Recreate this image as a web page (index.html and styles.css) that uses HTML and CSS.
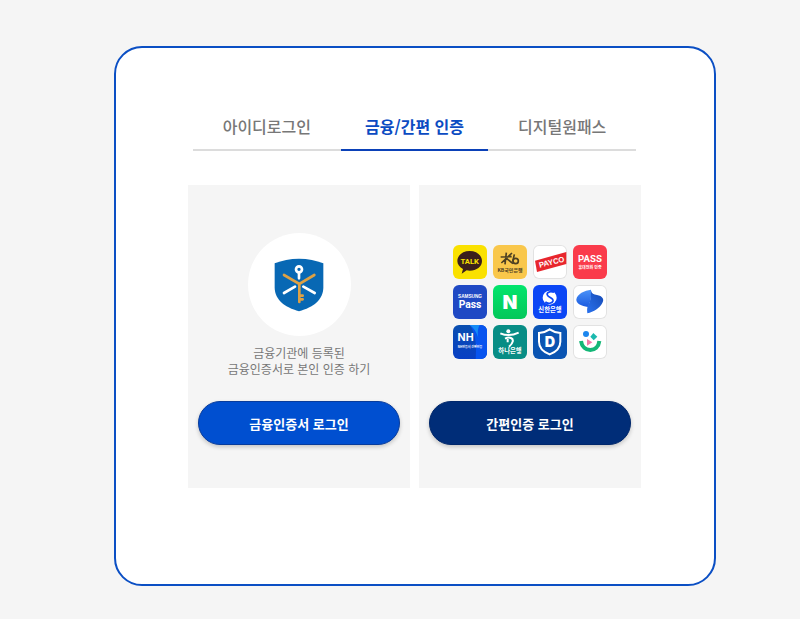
FILE: index.html
```html
<!DOCTYPE html>
<html lang="ko">
<head>
    <meta charset="UTF-8">
    <meta name="viewport" content="width=device-width, initial-scale=1.0">
    <title>금융/간편 인증 로그인</title>
    <link rel="stylesheet" href="styles.css">
</head>
<body>

    <main class="login-box">
        <nav class="tabs">
            <a href="#id" class="tab">아이디로그인</a>
            <a href="#cert" class="tab active" aria-current="page">금융/간편 인증</a>
            <a href="#onepass" class="tab">디지털원패스</a>
        </nav>

        <div class="panels">
            <section class="panel">
                <div class="panel-body">
                    <div class="cert-circle">
                        <svg class="cert-icon" viewBox="100 96 150 162" aria-hidden="true">
                            <path d="M175 98C202 98 226 103 248 112V184C248 222 218 244 175 256C132 244 102 222 102 184V112C124 103 148 98 175 98Z" fill="#0868b4"/>
                            <g fill="none" stroke-linecap="round" stroke-width="8">
                                <circle cx="175" cy="130" r="9" stroke="#fff"/>
                                <path d="M175 141V157M163 182L130 201M188 182L222 201" stroke="#fff"/>
                                <path d="M130 147L176 174L221 147M176 174V228M179 209H186M179 220H186" stroke="#dda145"/>
                            </g>
                        </svg>
                    </div>
                    <p class="desc">금융기관에 등록된<br>금융인증서로 본인 인증 하기</p>
                </div>
                <button type="button" class="login-btn">금융인증서 로그인</button>
            </section>

            <section class="panel">
                <div class="panel-body">
                    <ul class="apps">
                        <!-- Kakao -->
                        <li class="app kakao">
                            <svg viewBox="0 0 102 102">
                                <path d="M50 18C71 18 87 31 87 48S71 77 50 77C47 77 44 77 41 76L26 86L30 72C20 67 13 58 13 48C13 31 29 18 50 18Z" fill="#3b1f1c"/>
                                <text x="50" y="57" font-size="23" class="mark roboto" fill="#fae100">TALK</text>
                            </svg>
                        </li>
                        <!-- KB -->
                        <li class="app kb">
                            <svg viewBox="0 0 102 102">
                                <g fill="none" stroke="#4d4023" stroke-width="5">
                                    <path d="M23 36L56 35M40 23L36 58M57 24L25 54M38 38L60 56M64 28L59 50"/>
                                    <circle cx="68" cy="48" r="8"/>
                                </g>
                                <text x="51" y="82" font-size="15" class="ko" fill="#4d4023">KB국민은행</text>
                            </svg>
                        </li>
                        <!-- Payco -->
                        <li class="app white">
                            <svg viewBox="0 0 102 102">
                                <path d="M6 47L100 21V57L12 81Z" fill="#e8262d"/>
                                <text x="56" y="59" font-size="23" class="mark" fill="#fff" transform="rotate(-14 56 51)">PAYCO</text>
                            </svg>
                        </li>
                        <!-- PASS -->
                        <li class="app pass">
                            <svg viewBox="0 0 102 102">
                                <text x="51" y="52" font-size="29" class="mark roboto" fill="#fff">PASS</text>
                                <text x="51" y="73" font-size="12" class="ko" fill="#fff">휴대전화 인증</text>
                            </svg>
                        </li>
                        <!-- Samsung Pass -->
                        <li class="app samsung">
                            <svg viewBox="0 0 102 102">
                                <text x="51" y="38" font-size="14" class="mark" fill="#fff">SAMSUNG</text>
                                <text x="51" y="69" font-size="31" class="mark roboto" fill="#fff">Pass</text>
                            </svg>
                        </li>
                        <!-- Naver -->
                        <li class="app naver">
                            <svg viewBox="0 0 102 102">
                                <text x="51" y="72" font-size="58" class="heavy" fill="#fff">N</text>
                            </svg>
                        </li>
                        <!-- Shinhan -->
                        <li class="app shinhan">
                            <svg viewBox="0 0 102 102">
                                <circle cx="50" cy="38" r="21" fill="#fff"/>
                                <path d="M63 22C50 17 40 23 43 30C46 38 62 38 60 48C58 56 44 57 37 51" fill="none" stroke="#0b46f5" stroke-width="5"/>
                                <text x="51" y="82" font-size="19" class="ko" fill="#fff">신한은행</text>
                            </svg>
                        </li>
                        <!-- Toss -->
                        <li class="app white">
                            <svg viewBox="0 0 102 102">
                                <defs>
                                    <linearGradient id="blade-left" x1="0" y1="0" x2="0" y2="1">
                                        <stop offset="0" stop-color="#4b93f8"/>
                                        <stop offset="1" stop-color="#1b5be0"/>
                                    </linearGradient>
                                    <linearGradient id="blade-right" x1="1" y1="0" x2="0" y2="1">
                                        <stop offset="0" stop-color="#1549b4"/>
                                        <stop offset="1" stop-color="#2a72ee"/>
                                    </linearGradient>
                                </defs>
                                <path d="M54 14C35 16 12 27 10 43C9 57 26 63 44 66C52 54 56 34 54 14Z" fill="url(#blade-left)"/>
                                <path d="M54 17C56 26 62 28 72 30C88 33 95 42 88 54C81 69 62 81 43 85C42 77 42 71 44 64C52 50 55 36 54 17Z" fill="url(#blade-right)"/>
                            </svg>
                        </li>
                        <!-- NH -->
                        <li class="app nh">
                            <svg viewBox="0 0 102 102">
                                <path d="M50 0C64 20 72 45 68 102H102V0Z" fill="#0754ef"/>
                                <path d="M50 0H80C72 14 74 32 78 48C74 28 66 12 50 0Z" fill="#168df5"/>
                                <text x="38" y="49" font-size="32" class="mark inter" fill="#fff">NH</text>
                                <text x="51" y="70" font-size="9" class="ko" fill="#fff">NH인증서 간편인증</text>
                            </svg>
                        </li>
                        <!-- Hana -->
                        <li class="app hana">
                            <svg viewBox="0 0 102 102">
                                <circle cx="46" cy="19" r="6" fill="#fff"/>
                                <path d="M22 25C38 32 58 32 77 23M36 41C50 34 62 40 59 50C58 56 54 60 48 65M44 42V52" fill="none" stroke="#fff" stroke-width="6"/>
                                <text x="51" y="85" font-size="19" class="ko" fill="#fff">하나은행</text>
                            </svg>
                        </li>
                        <!-- Shield -->
                        <li class="app shield">
                            <svg viewBox="0 0 102 102">
                                <path d="M50 13C60 20 71 23 82 24V50C82 69 68 81 50 88C32 81 18 69 18 50V24C29 23 40 20 50 13Z" fill="none" stroke="#fff" stroke-width="6"/>
                                <text x="51" y="66" font-size="43" class="heavy" fill="#fff">D</text>
                            </svg>
                        </li>
                        <!-- Smile -->
                        <li class="app white">
                            <svg viewBox="0 0 102 102">
                                <circle cx="39" cy="27" r="9" fill="#1d86ee"/>
                                <path d="M52 35L61 24L73 35L62 46Z" fill="#1bb9ae"/>
                                <path d="M42 42L58 52L42 62Z" fill="#f47aa7"/>
                                <path d="M24 48C29 84 75 84 79 48" fill="none" stroke="#14b777" stroke-width="12"/>
                            </svg>
                        </li>
                    </ul>
                </div>
                <button type="button" class="login-btn navy">간편인증 로그인</button>
            </section>
        </div>
    </main>

</body>
</html>
```
FILE: styles.css
```css
* {
    box-sizing: border-box;
}

body {
    margin: 0;
    padding: 46px 84px 34px 114px;
    background-color: #f5f5f5;
    font-family: "Noto Sans CJK KR", "Noto Sans", sans-serif;
}

.login-box {
    padding: 58px 73px 96px 72px;
    background-color: #fff;
    border: 2px solid #0b4fc4;
    border-radius: 28px;
}

.tabs {
    display: flex;
    margin: 0 5px 34px;
}

.tab {
    flex: 1;
    height: 45px;
    line-height: 40px;
    font-size: 16px;
    font-weight: 500;
    text-align: center;
    text-decoration: none;
    white-space: nowrap;
    color: #777;
    border-bottom: 2px solid #dcdcdc;
}

.tab.active {
    font-weight: 700;
    color: #0b4bc2;
    border-bottom-color: #0b41b8;
}

.panels {
    display: flex;
    gap: 9px;
}

.panel {
    flex: 1;
    padding: 48px 10px 43px;
    background-color: #f5f5f5;
}

.panel-body {
    display: flex;
    flex-direction: column;
    align-items: center;
    height: 168px;
}

.cert-circle {
    display: flex;
    align-items: center;
    justify-content: center;
    width: 103px;
    height: 103px;
    border-radius: 50%;
    background-color: #fff;
}

.cert-icon {
    width: 50px;
    height: 54px;
}

.desc {
    margin: 9px 0 0;
    font-size: 12px;
    line-height: 16px;
    text-align: center;
    color: #777;
}

.login-btn {
    display: block;
    width: 100%;
    height: 44px;
    padding: 0;
    font-family: inherit;
    font-size: 13px;
    font-weight: 700;
    color: #fff;
    background-color: #004fd0;
    border: 1px solid #083c9c;
    border-radius: 22px;
    box-shadow: 0 2px 4px rgba(0, 0, 0, 0.2);
    cursor: pointer;
}

.login-btn.navy {
    background-color: #002d78;
    border-color: #00276b;
}

.apps {
    display: grid;
    grid-template-columns: repeat(4, 34px);
    gap: 6px;
    margin: 12px 0 0;
    padding: 0;
    list-style: none;
}

.app {
    height: 34px;
    border-radius: 6px;
    overflow: hidden;
}

.app svg {
    display: block;
    width: 34px;
    height: 34px;
}

.app text {
    text-anchor: middle;
}

.mark {
    font-family: "Liberation Sans", sans-serif;
    font-weight: 700;
}

.mark.roboto {
    font-family: Roboto, sans-serif;
}

.mark.inter {
    font-family: Inter, sans-serif;
}

.heavy {
    font-family: Inter, sans-serif;
    font-weight: 900;
}

.ko {
    font-weight: 700;
}

.kakao {
    background-color: #fae100;
}

.kb {
    background-color: #f9c74b;
}

.white {
    background-color: #fff;
    box-shadow: inset 0 0 0 1px #e2e2e2;
}

.pass {
    background-color: #fa3b4b;
}

.samsung {
    background-color: #1f49c4;
}

.naver {
    background: linear-gradient(#02e56c, #03c75a);
}

.shinhan {
    background-color: #0b46f5;
}

.nh {
    background: linear-gradient(#0a4fb0, #083fc4);
}

.hana {
    background-color: #078d85;
}

.shield {
    background-color: #0a54b2;
}
```
